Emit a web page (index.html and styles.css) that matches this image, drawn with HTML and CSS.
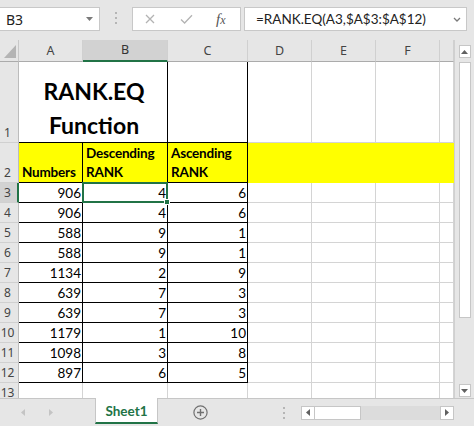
FILE: index.html
```html
<!DOCTYPE html>
<html>
<head>
<meta charset="utf-8">
<title>RANK.EQ</title>
<link rel="stylesheet" href="styles.css">
</head>
<body>
<div class="app">
  <div class="toolbar">
    <div class="namebox">
      <span class="nb-text">B3</span>
      <svg class="nb-arrow" width="7" height="4" viewBox="0 0 7 4"><path d="M0 0H7L3.5 4Z" fill="#7a7a7a"/></svg>
    </div>
    <div class="grip"><i></i><i></i><i></i></div>
    <div class="fxbox">
      <svg class="ic-x" width="10" height="10" viewBox="0 0 10 10"><path d="M1 1L9 9M9 1L1 9" stroke="#b3b3b3" stroke-width="1.3" fill="none"/></svg>
      <svg class="ic-ok" width="13" height="10" viewBox="0 0 13 10"><path d="M1 5.5L4.6 9L12 1.2" stroke="#b3b3b3" stroke-width="1.3" fill="none"/></svg>
      <span class="fx"><i>f</i><i class="fx-x">x</i></span>
    </div>
    <div class="formula">
      <span class="f-text">=RANK.EQ(A3,$A$3:$A$12)</span>
      <svg width="8" height="5" viewBox="0 0 8 5"><path d="M1 1L4 4L7 1" stroke="#7a7a7a" stroke-width="1.3" fill="none"/></svg>
    </div>
  </div>

  <div class="main">
    <div class="sheet">
      <div class="grid">
        <div class="corner"><svg width="12" height="13" viewBox="0 0 12 13"><path d="M12 0V13H0Z" fill="#b4b4b4"/></svg></div>
        <div class="ch">A</div><div class="ch sel">B</div><div class="ch">C</div><div class="ch">D</div><div class="ch">E</div><div class="ch">F</div><div class="ch"></div>

        <div class="rh">1</div><div class="title bk">RANK.EQ Function</div><div class="bk"></div><div></div><div></div><div></div><div></div>

        <div class="rh">2</div><div class="y bk hd">Numbers</div><div class="y bk hd">Descending RANK</div><div class="y bk hd">Ascending RANK</div><div class="y yf"></div><div class="y yf"></div><div class="y yf"></div><div class="y yf"></div>

        <div class="rh sel">3</div><div class="bk num">906</div><div class="bk num cur">4<i class="selbox"></i><i class="handle"></i></div><div class="bk num">6</div><div></div><div></div><div></div><div></div>

        <div class="rh">4</div><div class="bk num">906</div><div class="bk num">4</div><div class="bk num">6</div><div></div><div></div><div></div><div></div>

        <div class="rh">5</div><div class="bk num">588</div><div class="bk num">9</div><div class="bk num">1</div><div></div><div></div><div></div><div></div>

        <div class="rh">6</div><div class="bk num">588</div><div class="bk num">9</div><div class="bk num">1</div><div></div><div></div><div></div><div></div>

        <div class="rh">7</div><div class="bk num">1134</div><div class="bk num">2</div><div class="bk num">9</div><div></div><div></div><div></div><div></div>

        <div class="rh">8</div><div class="bk num">639</div><div class="bk num">7</div><div class="bk num">3</div><div></div><div></div><div></div><div></div>

        <div class="rh">9</div><div class="bk num">639</div><div class="bk num">7</div><div class="bk num">3</div><div></div><div></div><div></div><div></div>

        <div class="rh">10</div><div class="bk num">1179</div><div class="bk num">1</div><div class="bk num">10</div><div></div><div></div><div></div><div></div>

        <div class="rh">11</div><div class="bk num">1098</div><div class="bk num">3</div><div class="bk num">8</div><div></div><div></div><div></div><div></div>

        <div class="rh">12</div><div class="bk num">897</div><div class="bk num">6</div><div class="bk num">5</div><div></div><div></div><div></div><div></div>

        <div class="rh">13</div><div></div><div></div><div></div><div></div><div></div><div></div><div></div>
      </div>
    </div>
    <div class="vscroll">
      <div class="vbtn"><svg width="7" height="4" viewBox="0 0 7 4"><path d="M0 4H7L3.5 0Z" fill="#606060"/></svg></div>
      <div class="vthumb"></div>
      <div class="vspace"></div>
      <div class="vbtn"><svg width="7" height="4" viewBox="0 0 7 4"><path d="M0 0H7L3.5 4Z" fill="#606060"/></svg></div>
    </div>
  </div>

  <div class="tabbar">
    <div class="tabnav">
      <svg width="4" height="7" viewBox="0 0 4 7"><path d="M4 0V7L0 3.5Z" fill="#c4c4c4"/></svg>
      <svg width="4" height="7" viewBox="0 0 4 7"><path d="M0 0V7L4 3.5Z" fill="#c4c4c4"/></svg>
    </div>
    <div class="tab">Sheet1</div>
    <div class="add"><svg width="15" height="15" viewBox="0 0 15 15"><circle cx="7.5" cy="7.5" r="6.6" stroke="#707070" stroke-width="1.2" fill="none"/><path d="M7.5 4V11M4 7.5H11" stroke="#707070" stroke-width="1.4"/></svg></div>
    <div class="hgrip"><i></i><i></i><i></i></div>
    <div class="hscroll">
      <div class="hbtn"><svg width="4" height="7" viewBox="0 0 4 7"><path d="M4 0V7L0 3.5Z" fill="#606060"/></svg></div>
      <div class="hthumb"></div>
      <div class="htrack"></div>
      <div class="hbtn"><svg width="4" height="7" viewBox="0 0 4 7"><path d="M0 0V7L4 3.5Z" fill="#606060"/></svg></div>
    </div>
  </div>
</div>
</body>
</html>
```

FILE: styles.css
```css
* { box-sizing: border-box; margin: 0; padding: 0; }
body {
  width: 474px; height: 426px; overflow: hidden;
  background: #e6e6e6;
  font-family: Lato, "Liberation Sans", sans-serif;
}
.app { display: flex; flex-direction: column; width: 474px; height: 426px; }

/* formula bar */
.toolbar { height: 40px; display: flex; align-items: flex-start; padding-top: 7px; }
.namebox {
  width: 100px; height: 24px; background: #fff;
  border: 1px solid #c8c8c8; border-left: none;
  display: flex; align-items: center; justify-content: space-between;
  padding: 0 6px 0 6px;
}
.nb-text { font-family: "Noto Sans", sans-serif; font-size: 14px; color: #222; }
.grip { width: 2px; margin-left: 15px; display: flex; flex-direction: column; gap: 3px; padding-top: 5px; }
.grip i, .hgrip i { display: block; width: 2px; height: 2px; background: #b5b5b5; }
.fxbox {
  width: 109px; height: 24px; margin-left: 15px; background: #fff;
  border: 1px solid #c8c8c8; display: flex; align-items: center; padding-left: 12px;
}
.ic-ok { margin-left: 25px; }
.fx { margin-left: 23px; font-family: "Liberation Serif", serif; color: #555; font-size: 15px; }
.fx i { font-style: italic; }
.fx .fx-x { font-size: 12px; }
.formula {
  width: 223px; height: 24px; margin-left: 3px; background: #fff;
  border: 1px solid #c8c8c8; display: flex; align-items: center; justify-content: space-between;
  padding: 0 5px 0 11px;
}
.f-text { font-size: 13.5px; color: #222; }

/* sheet */
.main { display: flex; height: 358px; }
.sheet { width: 454px; height: 358px; overflow: hidden; background: #fff; }
.grid {
  display: grid;
  grid-template-columns: 19px 64px 85px 80px 64px 64px 64px 14px;
  grid-template-rows: 22px 81px 40px repeat(11, 20px);
}
.grid > div {
  border-right: 1px solid #d4d4d4; border-bottom: 1px solid #d4d4d4;
  display: flex; align-items: flex-end;
  font-size: 13.5px; line-height: 18px; color: #000;
  padding: 0 1px 0 3px; white-space: nowrap;
}
.grid > .corner { background: #e6e6e6; justify-content: flex-end; padding: 0 2px 3px 0; border-right-color: #c8c8c8; border-bottom-color: #ababab; }
.grid > .ch {
  background: #e6e6e6; border-right-color: #d0d0d0; border-bottom-color: #ababab;
  justify-content: center; align-items: center;
  font-family: "Noto Sans", sans-serif; font-size: 12.5px; color: #444; padding: 0;
}
.grid > .ch.sel { background: #d2d2d2; border-bottom: 2px solid #217346; color: #333; }
.grid > .rh {
  background: #e6e6e6; border-right-color: #bcbcbc; border-bottom-color: #d0d0d0;
  justify-content: center; padding: 0 3px 1px 0;
  font-family: "Noto Sans", sans-serif; font-size: 12px; line-height: 16px; color: #444;
}
.grid > .rh.sel { background: #d2d2d2; border-right: 2px solid #217346; padding-right: 2px; }

.grid > .bk { border-right-color: #000; border-bottom-color: #000; }
.grid > .y { background: #ffff00; }
.grid > .yf { border-right-color: #ffff00; border-bottom-color: #ffff00; }
.grid > .num { justify-content: flex-end; }
.grid > .hd { font-weight: 700; white-space: normal; line-height: 19px; letter-spacing: -0.2px; }
.grid > .title {
  grid-column: span 2; justify-content: center; text-align: center;
  white-space: normal; font-weight: 700; font-size: 23px; line-height: 34px;
}
.grid > .cur { position: relative; }
.selbox { position: absolute; left: -1px; top: -1px; right: -1px; bottom: -1px; border: 2px solid #217346; z-index: 2; }
.handle { position: absolute; right: -3px; bottom: -3px; width: 6px; height: 6px; background: #217346; border: 1px solid #fff; z-index: 3; }

/* vertical scrollbar */
.vscroll {
  width: 20px; height: 358px; background: #e6e6e6; border-left: 1px solid #d0d0d0;
  display: flex; flex-direction: column; align-items: center; padding: 5px 0 1px 0;
}
.vbtn { width: 12px; height: 13px; background: #fff; border: 1px solid #c6c6c6; display: flex; align-items: center; justify-content: center; }
.vthumb { width: 12px; height: 256px; margin-top: 4px; background: #fff; border: 1px solid #c6c6c6; }
.vspace { flex: 1; }

/* tab bar */
.tabbar { height: 28px; border-top: 1px solid #c6c6c6; display: flex; align-items: center; background: #e6e6e6; }
.tabnav { width: 95px; display: flex; align-items: center; padding-left: 21px; gap: 24px; }
.tab {
  align-self: flex-start; margin-top: -1px; width: 63px; height: 26px; background: #fff;
  border-left: 1px solid #c6c6c6; border-right: 1px solid #c6c6c6; border-bottom: 2px solid #217346;
  display: flex; align-items: center; justify-content: center; padding-top: 2px;
  font-weight: 700; font-size: 13.5px; color: #217346;
}
.add { margin-left: 35px; display: flex; }
.hgrip { margin-left: 75px; width: 2px; display: flex; flex-direction: column; gap: 3px; }
.hscroll { margin-left: 16px; width: 153px; height: 14px; display: flex; }
.hbtn { width: 14px; height: 14px; background: #fff; border: 1px solid #c6c6c6; display: flex; align-items: center; justify-content: center; }
.hthumb { width: 46px; height: 14px; background: #fff; border: 1px solid #c6c6c6; border-left: none; }
.htrack { flex: 1; background: #dcdcdc; }
```
